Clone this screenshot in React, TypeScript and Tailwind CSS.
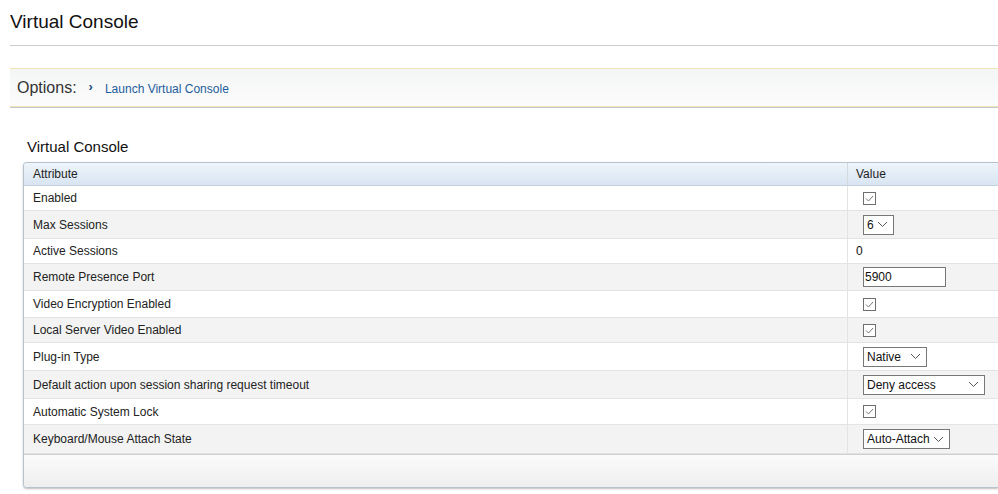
import React from "react";

const Chevron = () => (
  <svg width="11" height="7" viewBox="0 0 11 7" className="ml-auto mr-[5px]">
    <path d="M1 1 L5.5 5.5 L10 1" fill="none" stroke="#555" strokeWidth="1" />
  </svg>
);

const Check = () => (
  <div className="w-[13px] h-[13px] border border-[#6e6e6e] bg-white flex items-center justify-center">
    <svg width="9" height="7" viewBox="0 0 9 7">
      <path d="M1 3.5 L3.5 6 L8 1" fill="none" stroke="#777" strokeWidth="1" />
    </svg>
  </div>
);

const Sel = ({ label, w }: { label: string; w: string }) => (
  <div className={`${w} h-[20px] border border-[#777] bg-white flex items-center pl-[3px] text-[12px] text-[#111]`}>
    <span>{label}</span>
    <Chevron />
  </div>
);

type Row = { name: string; h: string; value: React.ReactNode };

const rows: Row[] = [
  { name: "Enabled", h: "h-[25px]", value: <Check /> },
  { name: "Max Sessions", h: "h-[28px]", value: <Sel label="6" w="w-[31px]" /> },
  { name: "Active Sessions", h: "h-[25px]", value: <span className="text-[12px] text-[#111] -ml-[7px]">0</span> },
  {
    name: "Remote Presence Port",
    h: "h-[27px]",
    value: (
      <div className="w-[83px] h-[20px] border border-[#777] bg-white flex items-center pl-[1px] text-[12px] text-[#111]">5900</div>
    ),
  },
  { name: "Video Encryption Enabled", h: "h-[27px]", value: <Check /> },
  { name: "Local Server Video Enabled", h: "h-[25px]", value: <Check /> },
  { name: "Plug-in Type", h: "h-[28px]", value: <Sel label="Native" w="w-[64px]" /> },
  { name: "Default action upon session sharing request timeout", h: "h-[28px]", value: <Sel label="Deny access" w="w-[122px]" /> },
  { name: "Automatic System Lock", h: "h-[26px]", value: <Check /> },
  { name: "Keyboard/Mouse Attach State", h: "h-[29px]", value: <Sel label="Auto-Attach" w="w-[87px]" /> },
];

export default function App() {
  return (
    <div className="w-[998px] h-[494px] bg-white overflow-hidden font-['Liberation_Sans',Arial,sans-serif] text-[#222]">
      <div className="pl-[10px] pt-[10px]">
        <h1 className="text-[19px] leading-[24px] text-[#111]">Virtual Console</h1>
        <div className="mt-[11px] border-t border-[#cccccc]" />
      </div>

      <div className="mt-[22px] pl-[10px]">
        <div className="h-[39px] border-t border-[#f2e3b8] border-b border-b-[#f2e3b8] bg-gradient-to-b from-[#f4f5f5] to-[#fcfcfc] flex items-center pl-[7px]">
          <span className="text-[16px] text-[#333]">Options:</span>
          <span className="ml-[12px] text-[13px] font-bold text-[#1f4f80] -mt-[2px]">›</span>
          <span className="ml-[12px] text-[12px] text-[#1d5c9c] mt-[2px]">Launch Virtual Console</span>
        </div>
        <div className="border-t border-[#c2c8cc]" />
      </div>

      <div className="pl-[23px] mt-[30px]">
        <div className="pl-[4px] text-[15px] leading-[18px] text-[#111]">Virtual Console</div>
        <div className="mt-[6px] border border-r-0 border-[#b7c3cf] rounded-l-[4px] shadow-[0_1px_2px_rgba(0,0,0,0.25)] overflow-hidden">
          <div className="h-[23px] flex bg-gradient-to-b from-[#eef4fa] to-[#d8e5f2] border-b border-[#c5d0da] text-[12px] text-[#222]">
            <div className="w-[824px] flex items-center pl-[9px] border-r border-[#d3d9df]">Attribute</div>
            <div className="flex-1 flex items-center pl-[8px]">Value</div>
          </div>
          {rows.map((r, i) => (
            <div
              key={r.name}
              className={`${r.h} flex text-[12px] text-[#222] border-b border-[#e3e3e3] ${i % 2 === 1 ? "bg-[#f3f3f3]" : "bg-white"}`}
            >
              <div className="w-[824px] flex items-center pl-[9px] border-r border-[#e3e3e3]">{r.name}</div>
              <div className="flex-1 flex items-center pl-[15px]">{r.value}</div>
            </div>
          ))}
          <div className="h-[33px] bg-gradient-to-b from-[#fbfbfb] to-[#eeeeee] border-t border-[#cfcfcf]" />
        </div>
      </div>
    </div>
  );
}
